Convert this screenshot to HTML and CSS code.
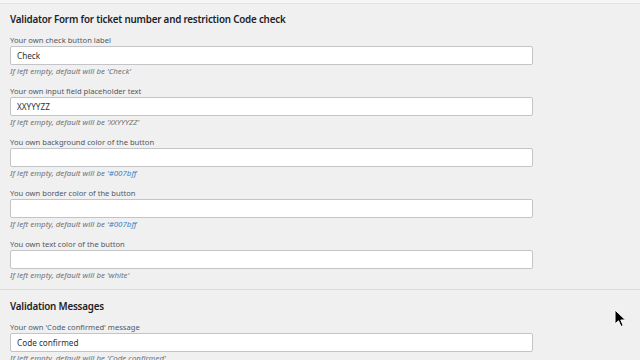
FILE: index.html
```html
<!DOCTYPE html>
<html>
<head>
<meta charset="utf-8">
<link rel="stylesheet" href="styles.css">
</head>
<body>
<div class="topbar"></div>
<main class="content">
  <h2 class="section-title">Validator Form for ticket number and restriction Code check</h2>
  <div class="field">
    <label class="label">Your own check button label</label>
    <div class="input">Check</div>
    <p class="hint">If left empty, default will be 'Check'</p>
  </div>
  <div class="field">
    <label class="label">Your own input field placeholder text</label>
    <div class="input">XXYYYZZ</div>
    <p class="hint">If left empty, default will be 'XXYYYZZ'</p>
  </div>
  <div class="field">
    <label class="label">You own background color of the button</label>
    <div class="input"></div>
    <p class="hint">If left empty, default will be <span class="code">'#007bff</span></p>
  </div>
  <div class="field">
    <label class="label">You own border color of the button</label>
    <div class="input"></div>
    <p class="hint">If left empty, default will be <span class="code">'#007bff</span></p>
  </div>
  <div class="field">
    <label class="label">You own text color of the button</label>
    <div class="input"></div>
    <p class="hint">If left empty, default will be 'white'</p>
  </div>
  <hr class="divider">
  <h2 class="section-title second">Validation Messages</h2>
  <div class="field">
    <label class="label">Your own 'Code confirmed' message</label>
    <div class="input">Code confirmed</div>
    <p class="hint">If left empty, default will be 'Code confirmed'</p>
  </div>
</main>
<svg class="cursor" width="14" height="20" viewBox="0 0 14 20">
  <path d="M1 1 L1 15 L4.5 11.8 L7 17.5 L9.2 16.5 L6.8 11 L11.5 11 Z" fill="#000" stroke="#fff" stroke-width="1"/>
</svg>
</body>
</html>
```
FILE: styles.css
```css
html, body {
  margin: 0;
  padding: 0;
}
body {
  background: #f0f0f1;
  font-family: "Noto Sans", "Open Sans", sans-serif;
  color: #3c434a;
  width: 640px;
  height: 360px;
  overflow: hidden;
  position: relative;
}
.topbar {
  height: 3px;
  background: #f6f6f7;
  border-bottom: 1px solid #e2e2e4;
}
.content {
  padding: 8px 0 0 10px;
  width: 523px;
}
.section-title {
  margin: 0;
  font-size: 9.8px;
  line-height: 16px;
  font-weight: 600;
  letter-spacing: -0.2px;
  color: #1d2327;
}
.section-title.second {
  margin-top: 9px;
}
.field {
  margin-top: 7px;
  margin-bottom: 10px;
}
.field + .field {
  margin-top: 0;
}
.label {
  display: block;
  font-size: 7.6px;
  line-height: 11px;
  color: #50575e;
}
.input {
  box-sizing: border-box;
  height: 19px;
  background: #fff;
  border: 1px solid #c3c4c7;
  border-radius: 2px;
  padding: 0 6px;
  font-size: 8.2px;
  line-height: 17px;
  color: #2c3338;
}
.hint {
  margin: 1px 0 -1px;
  font-size: 7.9px;
  line-height: 11px;
  font-style: italic;
  color: #6e7378;
}
.code {
  color: #3582c4;
}
.divider {
  border: 0;
  border-top: 1px solid #dcdcde;
  margin: -2px 0 0 -10px;
  width: 640px;
}
.cursor {
  position: absolute;
  left: 614px;
  top: 309px;
}
```
